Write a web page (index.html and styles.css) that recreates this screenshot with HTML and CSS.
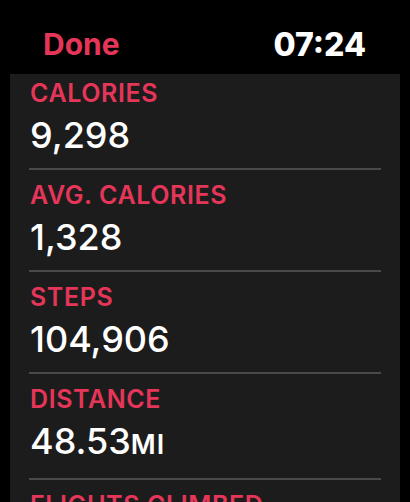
FILE: index.html
```html
<!DOCTYPE html>
<html>
<head>
<meta charset="utf-8">
<link rel="stylesheet" href="styles.css">
</head>
<body>
<div class="screen">
  <header class="topbar">
    <span class="done">Done</span>
    <span class="time">07:24</span>
  </header>
  <main class="panel">
    <div class="list">
      <div class="row">
        <div class="label">CALORIES</div>
        <div class="value">9,298</div>
      </div>
      <div class="row">
        <div class="label">AVG. CALORIES</div>
        <div class="value">1,328</div>
      </div>
      <div class="row">
        <div class="label">STEPS</div>
        <div class="value">104,906</div>
      </div>
      <div class="row">
        <div class="label">DISTANCE</div>
        <div class="value">48.53<span class="unit">MI</span></div>
      </div>
      <div class="row">
        <div class="label">FLIGHTS CLIMBED</div>
        <div class="value">52</div>
      </div>
    </div>
  </main>
</div>
</body>
</html>
```
FILE: styles.css
```css
html, body {
  margin: 0;
  padding: 0;
  background: #000;
}
.screen {
  width: 410px;
  height: 502px;
  display: flex;
  flex-direction: column;
  overflow: hidden;
  font-family: Inter, "Noto Sans", sans-serif;
}
.topbar {
  height: 74px;
  flex: none;
  display: flex;
  justify-content: space-between;
  align-items: flex-start;
  padding: 0 44px 0 43px;
  box-sizing: border-box;
}
.done {
  color: #e5365a;
  font-weight: 700;
  font-size: 30px;
  line-height: 30px;
  margin-top: 29px;
  letter-spacing: 0;
}
.time {
  color: #fff;
  font-weight: 800;
  font-size: 32px;
  line-height: 32px;
  margin-top: 29px;
  letter-spacing: 0;
}
.panel {
  flex: 1;
  margin: 0 10px;
  background: #1c1c1c;
  overflow: hidden;
}
.list {
  margin-top: -6px;
}
.row {
  margin: 0 19px;
  padding: 10px 0 13px 1px;
  border-bottom: 2px solid #4a4a4a;
}
.label {
  color: #e5365a;
  font-size: 25px;
  line-height: 30px;
  font-weight: 600;
  letter-spacing: 0.6px;
}
.value {
  color: #fff;
  font-size: 36px;
  line-height: 40px;
  font-weight: 500;
  margin-top: 7px;
}
.unit {
  font-size: 27px;
  font-weight: 600;
  letter-spacing: 1px;
}
```
